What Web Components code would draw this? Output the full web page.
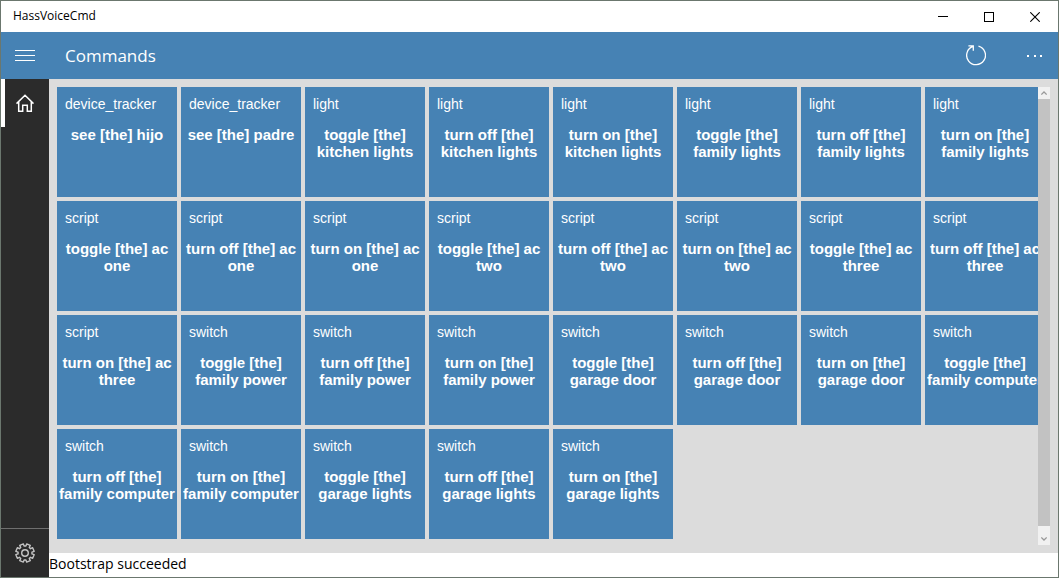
<!DOCTYPE html>
<html lang="en">
<head>
<meta charset="utf-8">
<title>HassVoiceCmd</title>
<style>
  html, body { height: 100%; margin: 0; }
  body { font-family: "Open Sans", "Noto Sans", sans-serif; color: #000; background: #fff; }
</style>
</head>
<body>
<app-window>
  <title-bar slot="title">HassVoiceCmd</title-bar>
  <app-header slot="header">Commands</app-header>
  <nav-rail slot="nav"></nav-rail>
  <command-grid></command-grid>
  <status-line slot="status">Bootstrap succeeded</status-line>
</app-window>

<script>
const define = (name, html, setup) => {
  const template = document.createElement('template');
  template.innerHTML = html;
  customElements.define(name, class extends HTMLElement {
    constructor() {
      super();
      this.attachShadow({ mode: 'open' }).append(template.content.cloneNode(true));
    }
    connectedCallback() { if (setup) setup(this, this.shadowRoot); }
  });
};

const buttonReset = `
  button { margin: 0; padding: 0; border: 0; background: none; color: inherit; font: inherit;
    display: flex; align-items: center; justify-content: center; }
  svg { display: block; fill: none; stroke: currentColor; }`;

define('app-window', `
  <style>
    :host { display: flex; flex-direction: column; box-sizing: border-box; height: 100vh; border: 1px solid #6b776e; }
    .body { flex: 1; display: flex; min-height: 0; }
    main { flex: 1; min-width: 0; display: flex; flex-direction: column; }
  </style>
  <slot name="title"></slot>
  <slot name="header"></slot>
  <div class="body">
    <slot name="nav"></slot>
    <main><slot></slot><slot name="status"></slot></main>
  </div>`);

define('title-bar', `
  <style>
    :host { display: flex; height: 31px; background: #fff; font-size: 12px; }
    ${buttonReset}
    .name { flex: 1; padding-left: 12px; line-height: 30px; }
    button { width: 46px; }
  </style>
  <span class="name"><slot></slot></span>
  <button aria-label="Minimize"><svg width="10" height="10" shape-rendering="crispEdges"><path d="M0 4.5h10"/></svg></button>
  <button aria-label="Maximize"><svg width="10" height="10" shape-rendering="crispEdges"><path d="M.5.5h9v9h-9z"/></svg></button>
  <button aria-label="Close"><svg width="10" height="10"><path d="M.3.3l9.4 9.4M9.7.3L.3 9.7" stroke-width="1.1"/></svg></button>`);

define('app-header', `
  <style>
    :host { display: flex; height: 47px; background: #4682b4; color: #fff; }
    ${buttonReset}
    .menu { width: 48px; }
    h1 { flex: 1; margin: 0; padding-left: 16px; font-size: 17px; font-weight: 400; line-height: 48px; }
    .refresh { width: 68px; }
    .more { width: 48px; }
  </style>
  <button class="menu" aria-label="Menu"><svg width="20" height="11" shape-rendering="crispEdges"><path d="M0 .5h20M0 5.5h20M0 10.5h20"/></svg></button>
  <h1><slot></slot></h1>
  <button class="refresh" aria-label="Refresh"><svg width="20" height="21" viewBox="0 0 20 21" stroke-width="1.3"><path d="M12.5 1.2a9.400 9.400 0 1 1-5.500.200M2.400.900h4.900v4.800"/></svg></button>
  <button class="more" aria-label="More options"><svg width="16" height="2" shape-rendering="crispEdges"><path d="M1 1h2M8 1h2M14 1h2" stroke-width="2"/></svg></button>`);

define('nav-rail', `
  <style>
    :host { display: flex; flex-direction: column; justify-content: space-between; width: 48px; background: #2b2b2b; color: #fff; }
    ${buttonReset}
    button { box-sizing: border-box; width: 100%; height: 48px; }
    .home { border-left: 4px solid #fff; padding-right: 4px; }
    .settings { height: 49px; border-top: 1px solid #6f6f6f; color: #c4c4c4; }
  </style>
  <button class="home" aria-label="Home" aria-current="page"><svg width="18" height="18" viewBox="0 0 18 18" stroke-width="1.5"><path d="M.5 9.6L9 1.2l8.500 8.400M2.700 7.800v9.400h4v-5.900h4.600v5.900h4V7.800"/></svg></button>
  <button class="settings" aria-label="Settings"><svg id="gear" width="20" height="20" viewBox="-10 -10 20 20" stroke-width="1.400"><circle r="3.300"/></svg></button>`,
  (host, root) => {
    const points = [];
    for (let i = 0; i < 8; i++) {
      for (const [offset, radius] of [[-12, 9.3], [12, 9.3], [15, 7], [30, 7]]) {
        const angle = (i * 45 + 22.5 + offset) * Math.PI / 180;
        points.push((radius * Math.cos(angle)).toFixed(2) + ' ' + (radius * Math.sin(angle)).toFixed(2));
      }
    }
    const path = document.createElementNS('http://www.w3.org/2000/svg', 'path');
    path.setAttribute('d', 'M' + points.join('L') + 'z');
    path.setAttribute('stroke-linejoin', 'round');
    root.getElementById('gear').append(path);
  });

define('command-tile', `
  <style>
    :host { display: block; font-family: "Liberation Sans", Arial, sans-serif; }
    button { display: flex; flex-direction: column; align-items: stretch; box-sizing: border-box; width: 100%; height: 110px;
      margin: 0; padding: 9px 0 0; border: 0; background: #4682b4; color: #fff; font: inherit; }
    .domain { padding-left: 8px; font-size: 14px; line-height: 17px; text-align: left; }
    .phrase { padding-top: 13px; font-size: 15px; font-weight: 700; line-height: 17px; text-align: center; }
  </style>
  <button><span class="domain"><slot name="domain"></slot></span><span class="phrase"><slot></slot></span></button>`);

define('scroll-rail', `
  <style>
    :host { display: flex; flex-direction: column; width: 12px; background: #f1f1f1; color: #999; }
    ${buttonReset}
    .up { height: 12px; }
    .thumb { flex: 1; background: #c2c2c2; }
    .down { height: 19px; padding-top: 6px; }
  </style>
  <button class="up" aria-label="Scroll up"><svg width="6" height="4" stroke-width="1.300"><path d="M.3 3.500L3 1l2.700 2.500"/></svg></button>
  <div class="thumb"></div>
  <button class="down" aria-label="Scroll down"><svg width="6" height="4" stroke-width="1.300"><path d="M.3.500L3 3l2.700-2.500"/></svg></button>`);

const commands = [
  ['device_tracker', 'see [the] hijo'],
  ['device_tracker', 'see [the] padre'],
  ...['kitchen lights', 'family lights'].flatMap(n => ['toggle', 'turn off', 'turn on'].map(v => ['light', `${v} [the] ${n}`])),
  ...['ac one', 'ac two', 'ac three'].flatMap(n => ['toggle', 'turn off', 'turn on'].map(v => ['script', `${v} [the] ${n}`])),
  ...['family power', 'garage door', 'family computer', 'garage lights'].flatMap(n => ['toggle', 'turn off', 'turn on'].map(v => ['switch', `${v} [the] ${n}`]))
];

define('command-grid', `
  <style>
    :host { flex: 1; min-height: 0; box-sizing: border-box; display: flex; padding: 8px; background: #dcdcdc; }
    .view { position: relative; flex: 1; display: flex; min-width: 0; }
    .tiles { flex: 1; display: grid; grid-template-columns: repeat(auto-fill, 120px); grid-auto-rows: 110px; gap: 4px;
      overflow-y: auto; scrollbar-width: none; }
    scroll-rail { position: absolute; top: 0; right: 0; bottom: 0; }
  </style>
  <div class="view"><div class="tiles"></div><scroll-rail></scroll-rail></div>`,
  (host, root) => {
    const tiles = root.querySelector('.tiles');
    for (const [domain, phrase] of commands) {
      const tile = document.createElement('command-tile');
      const label = document.createElement('span');
      label.slot = 'domain';
      label.textContent = domain;
      tile.append(label, phrase);
      tiles.append(tile);
    }
  });

define('status-line', `
  <style>
    :host { display: block; height: 24px; background: #fff; font-size: 14px; line-height: 22px; }
  </style>
  <slot></slot>`);
</script>
</body>
</html>
